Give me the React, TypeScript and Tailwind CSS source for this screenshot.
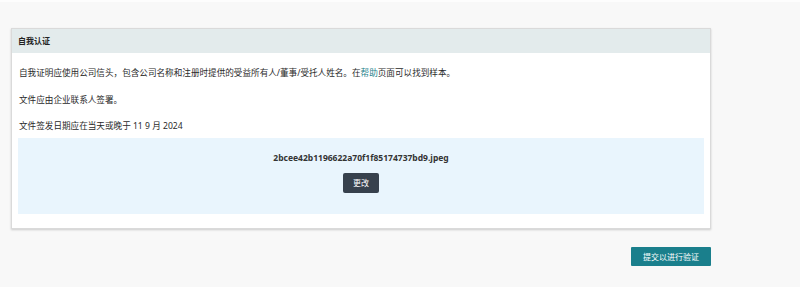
const font = { fontFamily: '"Noto Sans", "Noto Sans CJK SC", sans-serif' };

export default function App() {
  return (
    <div className="w-[800px] h-[287px] bg-[#f8f8f8] overflow-hidden text-[#2a2a2a]" style={font}>
      <div className="h-[2px] bg-[#fdfdfd]" />
      <div className="pl-[11px] pt-[26px] w-[711px]">
        <div className="bg-white border border-[#dadada] shadow-[0_1px_2px_rgba(0,0,0,0.18)]">
          <div className="h-[24px] bg-[#e3ebec] flex items-center px-[6px] text-[8px] font-bold text-[#222]">
            自我认证
          </div>
          <div className="px-[6px] pt-[14px] pb-[14px] text-[8.6px] leading-[12px]">
            <p className="pl-[1px]">
              自我证明应使用公司信头，包含公司名称和注册时提供的受益所有人/董事/受托人姓名。在
              <span className="text-[#1a7f8c]">帮助</span>页面可以找到样本。
            </p>
            <p className="pl-[1px] mt-[15px]">文件应由企业联系人签署。</p>
            <p className="pl-[1px] mt-[14px]">文件签发日期应在当天或晚于 11 9 月 2024</p>
            <div className="mt-[6px] bg-[#e9f5fd] h-[76px] flex flex-col items-center pt-[14px]">
              <div className="text-[8.5px] font-bold text-[#333] leading-[12px]">
                2bcee42b1196622a70f1f85174737bd9.jpeg
              </div>
              <button className="mt-[9px] w-[36px] h-[20px] bg-[#37414d] text-white text-[8px] rounded-[2px] flex items-center justify-center">
                更改
              </button>
            </div>
          </div>
        </div>
        <div className="flex justify-end mt-[18px]">
          <button className="w-[80px] h-[19px] bg-[#1a7f8c] text-white text-[8px] rounded-[1px] flex items-center justify-center">
            提交以进行验证
          </button>
        </div>
      </div>
    </div>
  );
}
